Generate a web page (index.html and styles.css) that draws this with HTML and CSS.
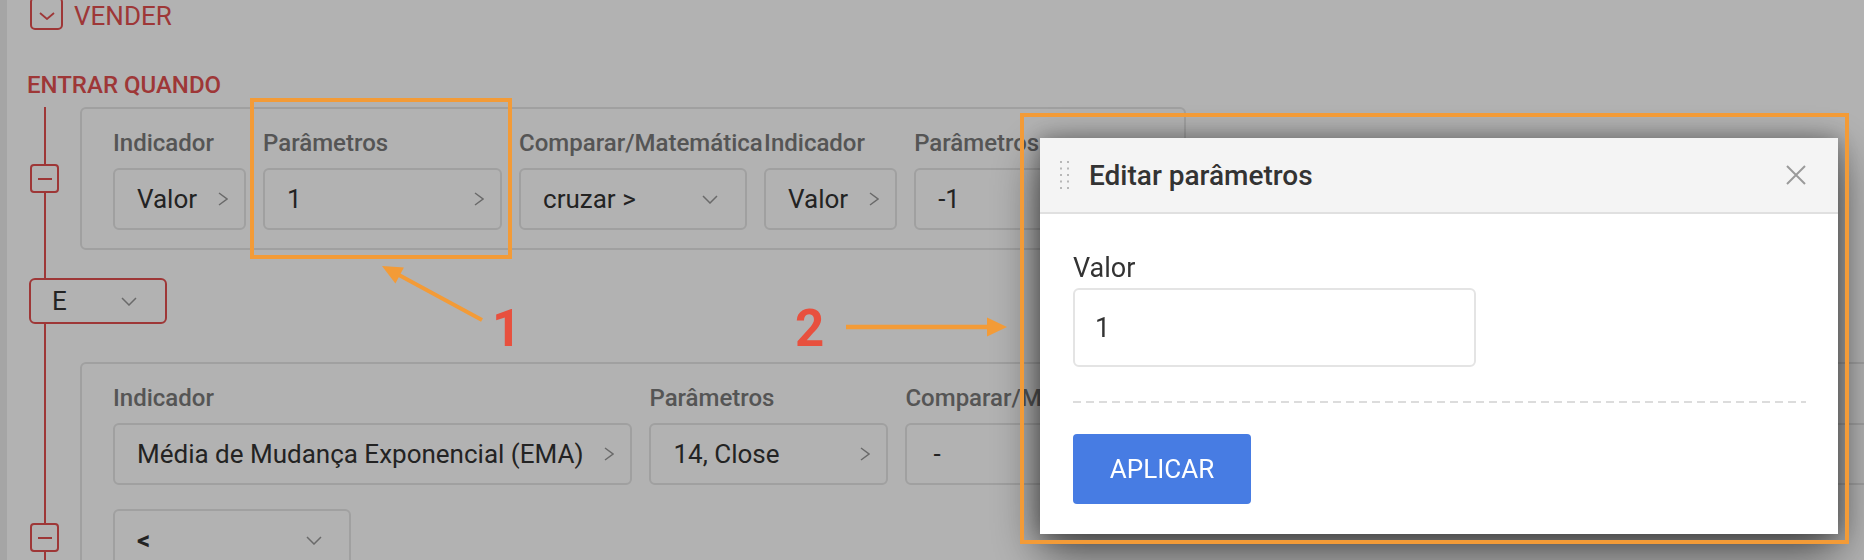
FILE: index.html
```html
<!DOCTYPE html>
<html lang="pt-BR">
<head>
<meta charset="utf-8">
<title>Editar parâmetros</title>
<link rel="stylesheet" href="styles.css">
</head>
<body>
<div class="page">
  <div class="strip"></div>
  <main class="main">
    <div class="section-head">
      <span class="toggle">
        <svg class="toggle-chev" viewBox="0 0 16 8" width="16" height="8"><path d="M1 1 L8 7 L15 1" fill="none" stroke="#e34f4f" stroke-width="1.8"/></svg>
      </span>
      <span class="section-name">VENDER</span>
    </div>
    <h2 class="enter-title">ENTRAR QUANDO</h2>
    <div class="conditions">
      <div class="cond">
        <div class="rail"><span class="minus"></span></div>
        <div class="card">
          <div class="row">
            <div class="field">
              <div class="label">Indicador</div>
              <div class="box"><span>Valor</span><svg class="chev-r" viewBox="0 0 10 14"><path d="M1 1 L9 7 L1 13" fill="none" stroke="#989898" stroke-width="1.5"/></svg></div>
            </div>
            <div class="field">
              <div class="label">Parâmetros</div>
              <div class="box box-param"><span>1</span><svg class="chev-r" viewBox="0 0 10 14"><path d="M1 1 L9 7 L1 13" fill="none" stroke="#989898" stroke-width="1.5"/></svg></div>
            </div>
            <div class="field">
              <div class="label">Comparar/Matemática</div>
              <div class="box box-select"><span>cruzar &gt;</span><svg class="chev-d" viewBox="0 0 16 9"><path d="M1 1 L8 8 L15 1" fill="none" stroke="#989898" stroke-width="1.5"/></svg></div>
            </div>
            <div class="field">
              <div class="label">Indicador</div>
              <div class="box"><span>Valor</span><svg class="chev-r" viewBox="0 0 10 14"><path d="M1 1 L9 7 L1 13" fill="none" stroke="#989898" stroke-width="1.5"/></svg></div>
            </div>
            <div class="field">
              <div class="label">Parâmetros</div>
              <div class="box box-param"><span>-1</span><svg class="chev-r" viewBox="0 0 10 14"><path d="M1 1 L9 7 L1 13" fill="none" stroke="#989898" stroke-width="1.5"/></svg></div>
            </div>
          </div>
        </div>
      </div>

      <div class="joiner">
        <div class="logic"><span>E</span><svg class="chev-d" viewBox="0 0 16 9"><path d="M1 1 L8 8 L15 1" fill="none" stroke="#989898" stroke-width="1.5"/></svg></div>
      </div>

      <div class="cond">
        <div class="rail"><span class="minus"></span></div>
        <div class="card card-tall">
          <div class="row">
            <div class="field">
              <div class="label">Indicador</div>
              <div class="box"><span>Média de Mudança Exponencial (EMA)</span><svg class="chev-r" viewBox="0 0 10 14"><path d="M1 1 L9 7 L1 13" fill="none" stroke="#989898" stroke-width="1.5"/></svg></div>
            </div>
            <div class="field">
              <div class="label">Parâmetros</div>
              <div class="box box-param"><span>14, Close</span><svg class="chev-r" viewBox="0 0 10 14"><path d="M1 1 L9 7 L1 13" fill="none" stroke="#989898" stroke-width="1.5"/></svg></div>
            </div>
            <div class="field">
              <div class="label">Comparar/Matemática</div>
              <div class="box box-select box-dash"><span>-</span><svg class="chev-d" viewBox="0 0 16 9"><path d="M1 1 L8 8 L15 1" fill="none" stroke="#989898" stroke-width="1.5"/></svg></div>
            </div>
            <div class="field">
              <div class="label">Indicador</div>
              <div class="box"><span>Média de Mudança Exponencial (EMA)</span><svg class="chev-r" viewBox="0 0 10 14"><path d="M1 1 L9 7 L1 13" fill="none" stroke="#989898" stroke-width="1.5"/></svg></div>
            </div>
            <div class="field">
              <div class="label">Parâmetros</div>
              <div class="box box-param"><span>28, Close</span><svg class="chev-r" viewBox="0 0 10 14"><path d="M1 1 L9 7 L1 13" fill="none" stroke="#989898" stroke-width="1.5"/></svg></div>
            </div>
          </div>
          <div class="row">
            <div class="field">
              <div class="box box-select box-select-wide"><span class="sym">&lt;</span><svg class="chev-d" viewBox="0 0 16 9"><path d="M1 1 L8 8 L15 1" fill="none" stroke="#989898" stroke-width="1.5"/></svg></div>
            </div>
          </div>
        </div>
      </div>
    </div>
  </main>
</div>

<div class="backdrop"></div>

<div class="modal">
  <div class="modal-header">
    <svg class="grip" viewBox="0 0 9 28" width="9" height="28">
      <rect x="0" y="0" width="2" height="2"/><rect x="7" y="0" width="2" height="2"/>
      <rect x="0" y="6.5" width="2" height="2"/><rect x="7" y="6.5" width="2" height="2"/>
      <rect x="0" y="13" width="2" height="2"/><rect x="7" y="13" width="2" height="2"/>
      <rect x="0" y="19.5" width="2" height="2"/><rect x="7" y="19.5" width="2" height="2"/>
      <rect x="0" y="26" width="2" height="2"/><rect x="7" y="26" width="2" height="2"/>
    </svg>
    <h3 class="modal-title">Editar parâmetros</h3>
    <button class="close" type="button" aria-label="Fechar">
      <svg viewBox="0 0 20 20" width="20" height="20"><path d="M1 1 L19 19 M19 1 L1 19" fill="none" stroke="#9a9a9a" stroke-width="2"/></svg>
    </button>
  </div>
  <div class="modal-body">
    <label class="input-label" for="valor">Valor</label>
    <input class="input" id="valor" type="text" value="1">
    <div class="divider"></div>
    <button class="apply" type="button">APLICAR</button>
  </div>
</div>

<div class="mark mark-1"></div>
<div class="mark mark-2"></div>
<svg class="arrows" width="1864" height="560" viewBox="0 0 1864 560">
  <line x1="482" y1="320" x2="398" y2="274.5" stroke="#f39b37" stroke-width="4"/>
  <polygon points="382,266 395.4,283.4 403.9,267.5" fill="#f39b37"/>
  <line x1="846" y1="327" x2="990" y2="327" stroke="#f39b37" stroke-width="4.5"/>
  <polygon points="987,317.5 1007,327 987,336.5" fill="#f39b37"/>
</svg>
<span class="num num-1">1</span>
<span class="num num-2">2</span>
</body>
</html>
```
FILE: styles.css
```css
* { box-sizing: border-box; }

html, body {
  margin: 0;
  padding: 0;
  overflow: hidden;
}

body {
  width: 1864px;
  height: 560px;
  background: #fff;
  font-family: Roboto, "Liberation Sans", Arial, sans-serif;
  color: #333;
}

.page {
  display: flex;
  height: 560px;
  overflow: hidden;
}

.strip {
  width: 7px;
  flex: none;
  background: #ededed;
}

.main {
  flex: 1;
  min-width: 0;
  padding-left: 22px;
}

/* section header */
.section-head {
  display: flex;
  align-items: flex-start;
  margin-top: -3px;
}

.toggle {
  width: 33px;
  height: 33px;
  margin-left: 1px;
  border: 2px solid #e34f4f;
  border-radius: 5px;
  display: flex;
  justify-content: center;
  align-items: center;
  padding-top: 5px;
}

.toggle-chev { display: block; }

.section-name {
  margin-left: 11px;
  margin-top: 4px;
  font-size: 26px;
  line-height: 30px;
  color: #e34f4f;
}

.enter-title {
  margin: 40px 0 8px -2px;
  font-size: 24px;
  line-height: 28px;
  font-weight: 500;
  color: #e34f4f;
}

/* conditions */
.conditions {
  position: relative;
}

.conditions::before {
  content: "";
  position: absolute;
  left: 15px;
  top: 0;
  bottom: 0;
  width: 2px;
  background: #e34f4f;
}

.cond {
  display: flex;
  align-items: center;
}

.rail {
  width: 51px;
  flex: none;
}

.minus {
  position: relative;
  display: flex;
  width: 29px;
  height: 29px;
  margin-left: 1px;
  border: 2px solid #e34f4f;
  border-radius: 4px;
  background: #fff;
  align-items: center;
  justify-content: center;
}

.minus::after {
  content: "";
  width: 14px;
  height: 2px;
  background: #e34f4f;
}

.card {
  flex: none;
  width: max-content;
  border: 2px solid #e5e5e5;
  border-radius: 6px;
  padding: 20px 14px 18px 31px;
}

.card-tall { min-height: 351px; }

.row { display: flex; }
.row + .row { margin-top: 24px; }

.field {
  flex: none;
  display: flex;
  flex-direction: column;
  align-items: flex-start;
}

.label {
  font-size: 24px;
  line-height: 28px;
  font-weight: 500;
  color: #7a7a7a;
  margin-bottom: 11px;
  white-space: nowrap;
}

.box {
  height: 62px;
  margin-right: 17px;
  border: 2px solid #e5e5e5;
  border-radius: 6px;
  display: flex;
  align-items: center;
  justify-content: space-between;
  gap: 21px;
  padding: 0 16px 0 22px;
  font-size: 26px;
  color: #333;
  white-space: nowrap;
}

.box-param { width: 239px; }

.box-select {
  width: 228px;
  padding-right: 27px;
}

.box-select-wide { width: 238px; }

.box-dash span { padding-left: 4px; }

.sym { font-weight: 700; }

.chev-r {
  width: 10px;
  height: 14px;
  flex: none;
}

.chev-d {
  width: 16px;
  height: 9px;
  flex: none;
}

.joiner { margin: 28px 0 38px; }

.logic {
  position: relative;
  width: 138px;
  height: 46px;
  border: 2px solid #e34f4f;
  border-radius: 6px;
  background: #fff;
  display: flex;
  align-items: center;
  justify-content: space-between;
  padding: 0 28px 0 21px;
  font-size: 26px;
  color: #333;
}

/* backdrop */
.backdrop {
  position: fixed;
  inset: 0;
  background: rgba(0, 0, 0, 0.3);
}

/* modal */
.modal {
  position: fixed;
  left: 1040px;
  top: 138px;
  width: 798px;
  background: #fff;
  box-shadow: 0 18px 45px rgba(0, 0, 0, 0.6), 0 0 20px rgba(0, 0, 0, 0.3);
}

.modal-header {
  display: flex;
  align-items: center;
  height: 76px;
  padding: 0 32px 0 20px;
  background: #f4f4f4;
  border-bottom: 2px solid #e0e0e0;
}

.grip {
  display: block;
  fill: #b8b8b8;
  flex: none;
}

.modal-title {
  margin: 0 0 0 20px;
  font-size: 28px;
  font-weight: 500;
  color: #333;
}

.close {
  margin-left: auto;
  padding: 0;
  border: 0;
  background: none;
  width: 20px;
  height: 20px;
}

.close svg { display: block; }

.modal-body {
  padding: 38px 32px 30px 33px;
}

.input-label {
  display: block;
  font-size: 27px;
  line-height: 32px;
  color: #333;
  margin-bottom: 4px;
}

.input {
  display: block;
  width: 403px;
  height: 79px;
  border: 2px solid #e4e4e4;
  border-radius: 6px;
  padding: 0 0 0 20px;
  font-family: Roboto, "Liberation Sans", Arial, sans-serif;
  font-size: 27px;
  color: #333;
  background: #fff;
  outline: none;
}

.divider {
  margin-top: 34px;
  height: 2px;
  background: repeating-linear-gradient(90deg, #dcdcdc 0 8px, transparent 8px 13px);
}

.apply {
  display: block;
  margin-top: 31px;
  width: 178px;
  height: 70px;
  border: 0;
  border-radius: 4px;
  background: #477ce3;
  color: #fff;
  font-family: Roboto, "Liberation Sans", Arial, sans-serif;
  font-size: 26px;
  padding: 0;
}

/* annotations */
.mark {
  position: fixed;
  border: 4px solid #f39b37;
}

.mark-1 {
  left: 250px;
  top: 98px;
  width: 262px;
  height: 161px;
}

.mark-2 {
  left: 1020px;
  top: 113px;
  width: 829px;
  height: 431px;
}

.arrows {
  position: fixed;
  left: 0;
  top: 0;
}

.num {
  position: fixed;
  font-size: 51px;
  line-height: 50px;
  font-weight: 700;
  color: #e8503e;
}

.num-1 { left: 492px; top: 304px; }
.num-2 { left: 795px; top: 304px; }
```
